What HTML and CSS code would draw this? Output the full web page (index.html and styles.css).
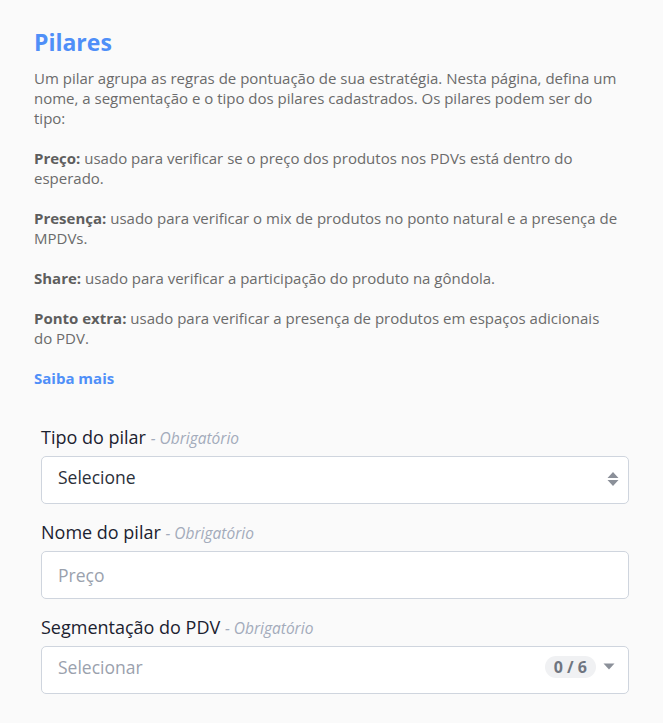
FILE: index.html
```html
<!DOCTYPE html>
<html lang="pt-BR">
<head>
<meta charset="utf-8">
<title>Pilares</title>
<link rel="stylesheet" href="styles.css">
</head>
<body>
<main class="page">
  <h1 class="title">Pilares</h1>
  <section class="intro">
    <p>Um pilar agrupa as regras de pontuação de sua estratégia. Nesta página, defina um nome, a segmentação e o tipo dos pilares cadastrados. Os pilares podem ser do tipo:</p>
    <p><strong>Preço:</strong> usado para verificar se o preço dos produtos nos PDVs está dentro do esperado.</p>
    <p><strong>Presença:</strong> usado para verificar o mix de produtos no ponto natural e a presença de MPDVs.</p>
    <p><strong>Share:</strong> usado para verificar a participação do produto na gôndola.</p>
    <p><strong>Ponto extra:</strong> usado para verificar a presença de produtos em espaços adicionais do PDV.</p>
    <p><a class="more" href="#">Saiba mais</a></p>
  </section>

  <form class="form">
    <div class="field">
      <label class="label">Tipo do pilar <span class="req">- Obrigatório</span></label>
      <div class="box select">
        <span class="value">Selecione</span>
        <svg class="updown" width="12" height="16" viewBox="0 0 12 16"><path d="M6 1 L11.5 7 H0.5 Z M0.5 9 H11.5 L6 15 Z" fill="#8b9099"/></svg>
      </div>
    </div>
    <div class="field">
      <label class="label">Nome do pilar <span class="req">- Obrigatório</span></label>
      <div class="box">
        <span class="placeholder">Preço</span>
      </div>
    </div>
    <div class="field">
      <label class="label">Segmentação do PDV <span class="req">- Obrigatório</span></label>
      <div class="box select">
        <span class="placeholder">Selecionar</span>
        <span class="count">0 / 6</span>
        <svg class="caret" width="12" height="7" viewBox="0 0 12 7"><path d="M0.5 0.5 H11.5 L6 6.5 Z" fill="#8b9099"/></svg>
      </div>
    </div>
  </form>
</main>
</body>
</html>
```

FILE: styles.css
```css
html, body {
  margin: 0;
  padding: 0;
  background: #fafafa;
}
body {
  font-family: "Open Sans", "Noto Sans", sans-serif;
  color: #6b6b6b;
}
.page {
  padding: 26px 34px 20px 34px;
}
.title {
  margin: 0 0 10px 0;
  font-size: 23px;
  line-height: 32px;
  font-weight: 700;
  color: #4f8ff8;
}
.intro {
  max-width: 585px;
}
.intro p {
  margin: 0 0 20px 0;
  font-size: 15px;
  line-height: 20px;
}
.intro strong {
  font-weight: 700;
  color: #5e5e5e;
}
.more {
  color: #4f8ff8;
  font-weight: 700;
  text-decoration: none;
}
.form {
  margin-top: 37px;
  padding-left: 7px;
  display: flex;
  flex-direction: column;
  gap: 16px;
}
.field {
  display: flex;
  flex-direction: column;
  gap: 6px;
}
.label {
  font-size: 18px;
  line-height: 24px;
  color: #1c2230;
}
.req {
  font-size: 15.5px;
  font-style: italic;
  color: #a3abbb;
}
.box {
  box-sizing: border-box;
  height: 48px;
  background: #fff;
  border: 1px solid #cfd5de;
  border-radius: 5px;
  display: flex;
  align-items: center;
  padding: 0 9px 0 16px;
  font-size: 17.5px;
}
.select {
  padding-bottom: 7px;
}
.value {
  color: #2b303a;
  flex: 1;
}
.placeholder {
  color: #9aa1ad;
  flex: 1;
}
.updown {
  display: block;
  margin-top: 4px;
}
.count {
  font-size: 16px;
  font-weight: 700;
  color: #6f7580;
  background: #f0f1f3;
  border-radius: 12px;
  padding: 0 9px;
  line-height: 22px;
  margin-right: 7px;
}
.caret {
  display: block;
  margin-right: 4px;
}
```
